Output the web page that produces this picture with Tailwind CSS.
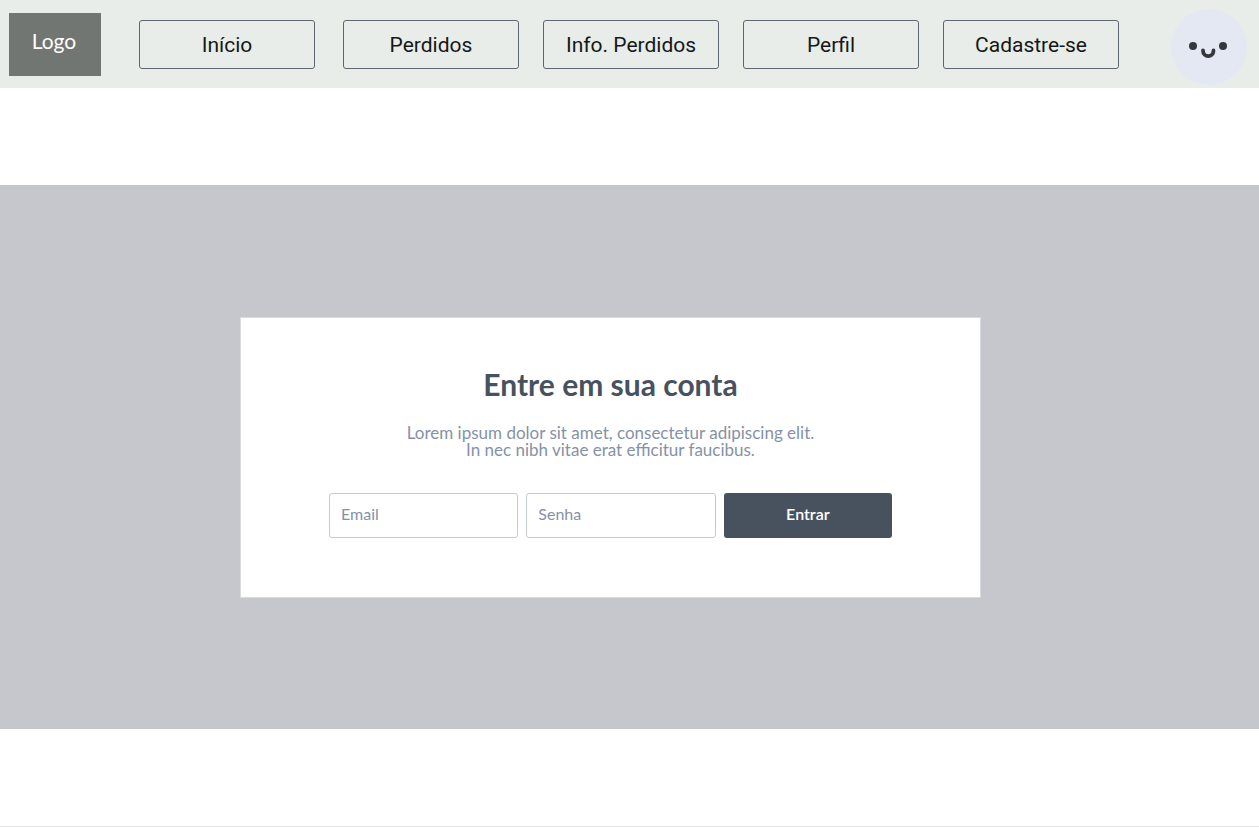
<!DOCTYPE html>
<html lang="pt-BR">
<head>
<meta charset="utf-8">
<meta name="viewport" content="width=device-width, initial-scale=1">
<title>Entre em sua conta</title>
<script src="https://cdn.jsdelivr.net/npm/@tailwindcss/browser@4"></script>
</head>
<body class="flex min-h-screen flex-col border-b border-[#e4e4e4] bg-white font-['Lato',sans-serif]">
  <header class="flex h-[88px] items-center bg-[#e8ede9] pr-3 pl-[9px]">
    <a href="#" class="flex h-[63px] w-[92px] shrink-0 items-center justify-center bg-[#727672] pr-0.5 pb-1.5 text-[21px] text-white">Logo</a>
    <nav class="ml-[38px] flex flex-1 gap-6 font-['Roboto',sans-serif] text-[21px] text-[#151817]">
      <a href="#" class="mr-1 flex h-[49px] flex-1 items-center justify-center rounded-[3px] border border-[#5d676f] pt-1 whitespace-nowrap">Início</a>
      <a href="#" class="flex h-[49px] flex-1 items-center justify-center rounded-[3px] border border-[#5d676f] pt-1 whitespace-nowrap">Perdidos</a>
      <a href="#" class="flex h-[49px] flex-1 items-center justify-center rounded-[3px] border border-[#5d676f] pt-1 whitespace-nowrap">Info. Perdidos</a>
      <a href="#" class="flex h-[49px] flex-1 items-center justify-center rounded-[3px] border border-[#5d676f] pt-1 whitespace-nowrap">Perfil</a>
      <a href="#" class="flex h-[49px] flex-1 items-center justify-center rounded-[3px] border border-[#5d676f] pt-1 whitespace-nowrap">Cadastre-se</a>
    </nav>
    <a href="#" aria-label="Avatar" class="mt-1.5 ml-[52px] shrink-0">
      <svg class="size-[76px]" viewBox="0 0 76 76" fill="none">
        <circle cx="38" cy="38" r="38" fill="#e4e8f2"/>
        <circle cx="22" cy="37" r="4" fill="#35373c"/>
        <circle cx="52" cy="37" r="4" fill="#35373c"/>
        <path d="M32 41.500c0 7.500 10.500 7.500 10.500 0" stroke="#35373c" stroke-width="3.800" stroke-linecap="round"/>
      </svg>
    </a>
  </header>
  <main class="mt-[97px] bg-[#c6c7cc] pt-[132px] pr-[278px] pb-[131px] pl-60">
    <section class="border border-[#d9dadd] bg-white px-[88px] pt-[46px] pb-[59px] text-center">
      <h1 class="text-[30px] leading-10 font-bold text-[#48525e]">Entre em sua conta</h1>
      <p class="mt-5 text-[17px] leading-[17px] text-[#8592a6]">Lorem ipsum dolor sit amet, consectetur adipiscing elit.<br>In nec nibh vitae erat efficitur faucibus.</p>
      <form class="mt-[35px] grid grid-cols-[189fr_189fr_168fr] gap-2">
        <input type="email" aria-label="Email" placeholder="Email" class="h-[45px] w-full min-w-0 rounded-[3px] border border-[#c3cad4] px-[11px] pb-1 text-base text-[#48525e] placeholder:text-[#8592a6]">
        <input type="password" aria-label="Senha" placeholder="Senha" class="h-[45px] w-full min-w-0 rounded-[3px] border border-[#c3cad4] px-[11px] pb-1 text-base text-[#48525e] placeholder:text-[#8592a6]">
        <button type="button" class="h-[45px] rounded-[3px] bg-[#48525e] pb-1 text-base font-semibold text-white">Entrar</button>
      </form>
    </section>
  </main>
</body>
</html>
